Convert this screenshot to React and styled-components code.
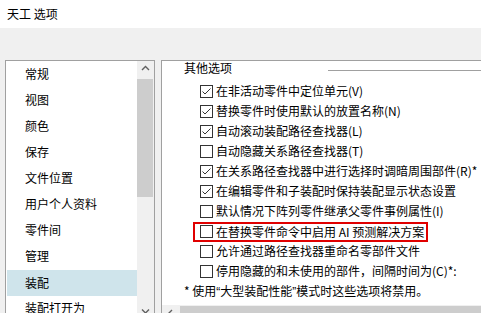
import React from "react";
import styled, { createGlobalStyle } from "styled-components";

const Global = createGlobalStyle`
  html, body { margin: 0; padding: 0; background: #f0f0f0; }
  body {
    font-family: "Noto Sans CJK SC", "Noto Sans", sans-serif;
    font-size: 12px;
    color: #000;
  }
  * { box-sizing: border-box; }
`;

const Window = styled.div`
  width: 481px;
  height: 313px;
  overflow: hidden;
  background: #f0f0f0;
  display: flex;
  flex-direction: column;
`;

const TitleBar = styled.div`
  height: 28px;
  flex: none;
  background: #fff;
  display: flex;
  align-items: center;
  padding-left: 7px;
  padding-bottom: 2px;
  font-size: 12px;
`;

const Body = styled.div`
  display: flex;
  padding: 32px 0 0 5px;
  gap: 6px;
  align-items: flex-start;
`;

const ListPanel = styled.div`
  width: 150px;
  height: 262px;
  flex: none;
  border: 1px solid #a0a0a0;
  background: #fff;
  display: flex;
`;

const List = styled.div`
  flex: 1;
  padding: 0 0 0 1px;
  display: flex;
  flex-direction: column;
`;

const Item = styled.div`
  height: 26px;
  line-height: 26px;
  padding-left: 18px;
  background: ${(p) => (p.$selected ? "#cfe4eb" : "transparent")};
  margin-top: ${(p) => (p.$selected ? "1px" : "0")};
  margin-bottom: ${(p) => (p.$selected ? "-1px" : "0")};
  white-space: nowrap;
`;

const VScroll = styled.div`
  width: 17px;
  flex: none;
  background: #f0f0f0;
  display: flex;
  flex-direction: column;
`;

const ArrowBox = styled.div`
  width: ${(p) => p.$w || "17px"};
  height: ${(p) => p.$h || "17px"};
  flex: none;
  display: flex;
  align-items: center;
  justify-content: center;
`;

const VThumb = styled.div`
  height: 118px;
  margin: 1px 1px 0 0;
  background: #cdcdcd;
  flex: none;
`;

const Spacer = styled.div`
  flex: 1;
`;

const OptionsPanel = styled.div`
  flex: 1;
  height: 262px;
  border-top: 1px solid #a0a0a0;
  border-left: 1px solid #a0a0a0;
  background: #fff;
  display: flex;
  flex-direction: column;
  min-width: 0;
`;

const Content = styled.div`
  flex: 1;
  display: flex;
  flex-direction: column;
  padding-left: 22px;
  white-space: nowrap;
`;

const GroupHeader = styled.div`
  height: 20px;
  display: flex;
  align-items: flex-start;
`;

const Legend = styled.div`
  line-height: 14px;
  height: 14px;
`;

const GroupLine = styled.div`
  flex: 1;
  height: 1px;
  margin: 9px 0 0 96px;
  background: #a0a0a0;
`;

const Row = styled.div`
  height: 20px;
  display: flex;
  align-items: center;
  padding-left: 16px;
`;

const Highlight = styled.div`
  height: 20px;
  display: flex;
  align-items: center;
  margin-left: -7px;
  padding: 0 2px 0 5px;
  border: 2px solid #e00000;
  margin-top: 1px;
`;

const Box = styled.span`
  width: 13px;
  height: 13px;
  flex: none;
  border: 1px solid #333;
  background: #fff;
  margin-right: 3px;
  display: flex;
  align-items: center;
  justify-content: center;
`;

const Label = styled.span`
  line-height: 20px;
`;

const Footnote = styled.div`
  height: 20px;
  line-height: 20px;
`;

const Quote = styled.span`
  font-family: "Liberation Sans", sans-serif;
`;

const HScroll = styled.div`
  height: 17px;
  flex: none;
  background: #f0f0f0;
  display: flex;
`;

const HThumb = styled.div`
  flex: 1;
  margin-top: 1px;
  background: #cdcdcd;
`;

const Chevron = ({ dir }) => {
  const paths = {
    up: "M1 5 L4.5 1.5 L8 5",
    down: "M1 1.5 L4.5 5 L8 1.5",
    left: "M5 1 L1.5 4.5 L5 8",
  };
  return (
    <svg width="9" height="9" viewBox="0 0 9 9">
      <path d={paths[dir]} fill="none" stroke="#606060" strokeWidth="1.4" />
    </svg>
  );
};

const Check = () => (
  <svg width="11" height="11" viewBox="0 0 11 11">
    <path d="M1.5 5.5 L4 8 L9.5 2.5" fill="none" stroke="#333" strokeWidth="1" />
  </svg>
);

const Option = ({ checked, children }) => (
  <>
    <Box>{checked && <Check />}</Box>
    <Label>{children}</Label>
  </>
);

const items = [
  "常规",
  "视图",
  "颜色",
  "保存",
  "文件位置",
  "用户个人资料",
  "零件间",
  "管理",
  "装配",
  "装配打开为",
];

const options = [
  { t: "在非活动零件中定位单元(V)", c: true },
  { t: "替换零件时使用默认的放置名称(N)", c: true },
  { t: "自动滚动装配路径查找器(L)", c: true },
  { t: "自动隐藏关系路径查找器(T)", c: false },
  { t: "在关系路径查找器中进行选择时调暗周围部件(R)*", c: true },
  { t: "在编辑零件和子装配时保持装配显示状态设置", c: true },
  { t: "默认情况下阵列零件继承父零件事例属性(I)", c: false },
  { t: "在替换零件命令中启用 AI 预测解决方案", c: false, hl: true },
  { t: "允许通过路径查找器重命名零部件文件", c: false },
  { t: "停用隐藏的和未使用的部件，间隔时间为(C)*:", c: false },
];

export default function App() {
  return (
    <Window>
      <Global />
      <TitleBar>天工 选项</TitleBar>
      <Body>
        <ListPanel>
          <List>
            {items.map((it) => (
              <Item key={it} $selected={it === "装配"}>
                {it}
              </Item>
            ))}
          </List>
          <VScroll>
            <ArrowBox>
              <Chevron dir="up" />
            </ArrowBox>
            <VThumb />
            <Spacer />
            <ArrowBox>
              <Chevron dir="down" />
            </ArrowBox>
          </VScroll>
        </ListPanel>
        <OptionsPanel>
          <Content>
            <GroupHeader>
              <Legend>其他选项</Legend>
              <GroupLine />
            </GroupHeader>
            {options.map((o) =>
              o.hl ? (
                <Row key={o.t}>
                  <Highlight>
                    <Option checked={o.c}>{o.t}</Option>
                  </Highlight>
                </Row>
              ) : (
                <Row key={o.t}>
                  <Option checked={o.c}>{o.t}</Option>
                </Row>
              )
            )}
            <Footnote>
              * 使用<Quote>“</Quote>大型装配性能<Quote>”</Quote>模式时这些选项将禁用。
            </Footnote>
          </Content>
          <HScroll>
            <ArrowBox $w="18px">
              <Chevron dir="left" />
            </ArrowBox>
            <HThumb />
          </HScroll>
        </OptionsPanel>
      </Body>
    </Window>
  );
}
